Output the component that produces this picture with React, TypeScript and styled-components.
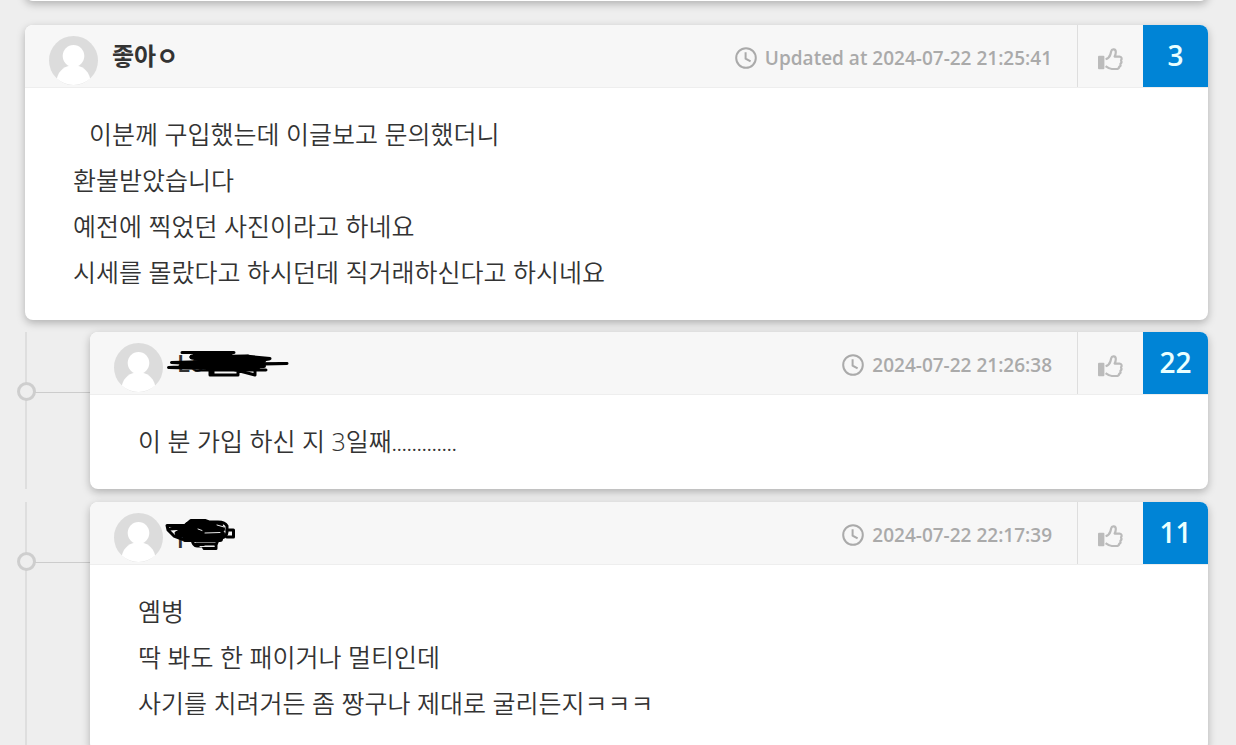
import React from "react";
import styled, { createGlobalStyle, css } from "styled-components";

const GlobalStyle = createGlobalStyle`
  * { box-sizing: border-box; }
  html, body { margin: 0; height: 100%; }
  body {
    background: #eeeeee;
    color: #333333;
    font-family: "Open Sans", "Noto Sans CJK KR", sans-serif;
    overflow: hidden;
  }
`;

const Page = styled.main`
  display: flex;
  flex-direction: column;
  padding: 0 28px 0 25px;
`;

const cardSurface = css`
  background: #ffffff;
  border-radius: 8px;
  box-shadow: 0 3px 9px rgba(0, 0, 0, 0.26);
`;

const PreviousCard = styled.div`
  ${cardSurface}
  height: 41px;
  margin: -40px 0 24px;
`;

const Card = styled.article`
  ${cardSurface}
  position: relative;
`;

const Replies = styled.div`
  display: flex;
  flex-direction: column;
  gap: 13px;
  margin-top: 12px;
`;

const Reply = styled.div`
  position: relative;
  padding-left: 63px;
  border-left: 2px solid #dedede;
`;

const Branch = styled.span`
  position: absolute;
  top: 60px;
  left: 0;
  width: 64px;
  height: 1px;
  background: #cccccc;
`;

const Node = styled.span`
  position: absolute;
  top: 50px;
  left: -10px;
  width: 19px;
  height: 19px;
  border: 3px solid #cecece;
  border-radius: 50%;
  background: #eeeeee;
`;

const Header = styled.header`
  display: flex;
  height: 63px;
  padding-left: 24px;
  background: #f7f7f7;
  border-bottom: 1px solid #eeeeee;
  border-radius: 8px 8px 0 0;
`;

const Author = styled.div`
  position: relative;
  display: flex;
  flex: 1;
  gap: 14px;
  padding-top: 11px;
`;

const Name = styled.span`
  font-size: 24px;
  line-height: 40px;
  font-weight: 600;
`;

const Stroke = styled.svg`
  position: absolute;
  left: 46px;
  top: 13px;
`;

const DateTime = styled.div`
  display: flex;
  align-items: center;
  gap: 8px;
  padding: 4px 25px 0 0;
  color: #aaaaaa;
  font-size: 19px;
  line-height: 24px;
  font-weight: 600;
`;

const LikeButton = styled.button`
  display: flex;
  align-items: center;
  justify-content: center;
  width: 66px;
  padding: 6px 2px 0 0;
  border: 0;
  border-left: 1px solid #dedede;
  background: transparent;
`;

const Count = styled.output`
  width: 65px;
  height: 62px;
  border-radius: 0 8px 0 0;
  background: #0084d6;
  color: #eaffff;
  font-size: 28px;
  line-height: 60px;
  font-weight: 600;
  text-align: center;
`;

const Body = styled.div`
  padding: 23px 48px 25px;
  font-size: 25px;
  line-height: 46px;
  font-weight: 350;
`;

const Line = styled.p<{ $indent?: boolean }>`
  margin: 0;
  text-indent: ${(p) => (p.$indent ? "16px" : "0")};
`;

const Dots = styled.span`
  font-size: 19px;
  line-height: 1;
  font-weight: 400;
`;

const Avatar = () => (
  <svg width="49" height="49" viewBox="0 0 49 49" aria-hidden="true">
    <circle cx="24.5" cy="24.5" r="24.5" fill="#dcdcdc" />
    <ellipse cx="24.5" cy="20" rx="10.8" ry="11" fill="#fff" />
    <path d="M7.8 42.4C10 34 16 29.5 24.5 29.5S39 34 41.2 42.4A24.5 24.5 0 0 1 7.8 42.4Z" fill="#fff" />
  </svg>
);

const Clock = () => (
  <svg width="22" height="22" viewBox="0 0 22 22" fill="none" stroke="#aaaaaa" strokeWidth="2" aria-hidden="true">
    <circle cx="11" cy="11" r="9.8" />
    <path d="M10.6 5.2V11.6L15.6 14.4" />
  </svg>
);

const Thumb = () => (
  <svg width="28" height="24" viewBox="0 0 28 24" fill="none" aria-hidden="true">
    <rect x="2" y="8.8" width="6.4" height="13.4" rx="1" fill="#bbbbbb" />
    <path
      d="M9.6 12.2C12.2 11.4 13.8 9.6 14.4 7.4L15.2 4.2C15.8 1.6 19.8 1.8 19.8 5C19.8 6.8 19.4 8.2 18.6 9.6H23.6C25.8 9.8 26.2 12 25 13.2C25.8 14.6 25.4 16 24.4 16.8C24.8 18 24.2 19.4 23.2 19.8C23 21.2 22 22 20.4 22H15.8C13.2 22 12 21 9.6 19.2"
      stroke="#bbbbbb"
      strokeWidth="2.2"
      strokeLinejoin="round"
    />
  </svg>
);

const LongScribble = () => (
  <Stroke width="130" height="36" viewBox="0 0 130 36" fill="none" stroke="#000" strokeWidth="3" strokeLinecap="round" strokeLinejoin="round" aria-hidden="true">
    <path d="M22 7.5H74L31 12L85 11L110 13.5L30 17L11.5 17.5L60 20L8.5 22.5L106 25L36 25L100 18L20 21L127 18.5L80 19L109 14L76 12L34 10L70 24L92 14L104 20L32 23L66 14L36 19L72 8" />
    <path d="M50 24V30H53V25M53 30H78V24M72 24L95 30V24L80 23" />
    <path d="M32 12L62 17L88 12L98 22L48 22L40 15L64 13L98 15" strokeWidth="5" />
    <path d="M52 16H104M38 21H104" strokeWidth="4" />
  </Stroke>
);

const ShortScribble = () => (
  <Stroke width="80" height="40" viewBox="0 0 80 40" fill="none" stroke="#000" strokeWidth="3" strokeLinecap="round" strokeLinejoin="round" aria-hidden="true">
    <path d="M25 10.5H7L8 15L14 21L22 24H57Q67 23 67 17V11Q65 7 58 7H49L45 5.5H31L25 10.5L10 14L24 13L16 18L26 22" />
    <path d="M67 15H73.5V22H67M32 24Q33 31 37 31H43L44 33.5H56V30L58 25M36 29H56" />
    <path d="M22 14H62M18 19H62M28 10H60M26 24H60M34 8H46" strokeWidth="6" />
    <path d="M38 14L42 15.5M45 18L60 17.5M57 10L64 12M40 31.5H54" stroke="#e8e8e8" strokeWidth="1" />
  </Stroke>
);

interface CommentProps {
  name: string;
  date: string;
  votes: number;
  scribble?: React.ReactNode;
  children: React.ReactNode;
}

const Comment = ({ name, date, votes, scribble, children }: CommentProps) => (
  <Card>
    <Header>
      <Author>
        <Avatar />
        <Name>{name}</Name>
        {scribble}
      </Author>
      <DateTime>
        <Clock />
        <time>{date}</time>
      </DateTime>
      <LikeButton type="button" aria-label="Like">
        <Thumb />
      </LikeButton>
      <Count>{votes}</Count>
    </Header>
    <Body>{children}</Body>
  </Card>
);

export default function App() {
  return (
    <>
      <GlobalStyle />
      <Page>
        <PreviousCard />
        <Comment name="좋아ㅇ" date="Updated at 2024-07-22 21:25:41" votes={3}>
          <Line $indent>이분께 구입했는데 이글보고 문의했더니</Line>
          <Line>환불받았습니다</Line>
          <Line>예전에 찍었던 사진이라고 하네요</Line>
          <Line>시세를 몰랐다고 하시던데 직거래하신다고 하시네요</Line>
        </Comment>
        <Replies>
          <Reply>
            <Branch />
            <Node />
            <Comment name="Lo" date="2024-07-22 21:26:38" votes={22} scribble={<LongScribble />}>
              <Line>
                이 분 가입 하신 지 3일째<Dots>.............</Dots>
              </Line>
            </Comment>
          </Reply>
          <Reply>
            <Branch />
            <Node />
            <Comment name="p" date="2024-07-22 22:17:39" votes={11} scribble={<ShortScribble />}>
              <Line>옘병</Line>
              <Line>딱 봐도 한 패이거나 멀티인데</Line>
              <Line>사기를 치려거든 좀 짱구나 제대로 굴리든지ㅋㅋㅋ</Line>
            </Comment>
          </Reply>
        </Replies>
      </Page>
    </>
  );
}
